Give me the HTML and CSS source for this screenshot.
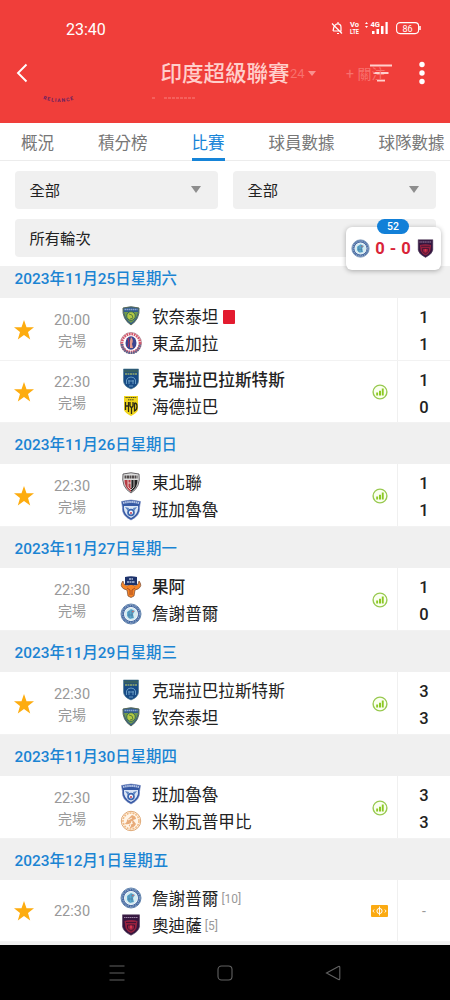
FILE: index.html
```html
<!DOCTYPE html>
<html lang="zh-Hant">
<head>
    <meta charset="UTF-8">
    <meta name="viewport" content="width=device-width, initial-scale=1.0">
    <title>印度超級聯賽</title>
    <link rel="stylesheet" href="styles.css">
</head>
<body>
    <svg class="sprite">
        <symbol id="star" viewBox="0 0 20 20">
            <path d="M10 0l2.500 7.200H20l-6 4.700 2.200 7.600L10 15l-6.200 4.500L6 11.900 0 7.200h7.500z" fill="#fdac0f"/>
        </symbol>
        <symbol id="stats" viewBox="0 0 16 16">
            <circle cx="8" cy="8" r="6.900" fill="#fafff0" stroke="#98c950" stroke-width="1.400"/>
            <path d="M4.200 8.600h1.900v3H4.200zM7 6.800h2v4.800H7zM9.800 4.500h1.900v7.100H9.800z" fill="#8cc924"/>
        </symbol>
        <symbol id="live" viewBox="0 0 17 12">
            <rect width="17" height="12" rx="1" fill="#fbaa12"/>
            <circle cx="8.500" cy="6" r="2.600" fill="none" stroke="#fff"/>
            <path d="M8.500 1.500v9M3.200 4.500L1.900 6l1.300 1.500M13.800 4.500L15.100 6l-1.300 1.500" fill="none" stroke="#fff" stroke-width=".9"/>
        </symbol>
        <symbol id="chennai" viewBox="0 0 22 22">
            <path d="M3 3q8-2.500 16 0 1 11-8 17Q2 14 3 3z" fill="#315b8d" stroke="#5b6c57"/>
            <path d="M4 7h14q-1 7-7 11-6-4-7-11z" fill="#719b48"/>
            <path d="M4.500 4.500h13" stroke="#8ba5cd" stroke-width="1.500" stroke-dasharray="1.500 .5"/>
            <circle cx="11" cy="11" r="4.300" fill="#b4c943" stroke="#38665d"/>
            <path d="M9 9l3 1 1 3-3 1" fill="none" stroke="#5c803d"/>
        </symbol>
        <symbol id="eastbengal" viewBox="0 0 22 22">
            <circle cx="11" cy="11" r="10.500" fill="#fff" stroke="#b89aa4"/>
            <circle cx="11" cy="11" r="9" fill="none" stroke="#d3576c" stroke-width="2.600" stroke-dasharray="1.800 .7"/>
            <path d="M2 12a9 9 0 0 0 18 0" fill="none" stroke="#54648e" stroke-width="2.500" stroke-dasharray="1.500 .8"/>
            <ellipse cx="11" cy="11" rx="5.500" ry="6.700" fill="#3b4590"/>
            <path d="M11 5q3 3 1 7l1 4h-3V9z" fill="#e59b8c"/>
            <path d="M8 6q2 5 0 9" fill="none" stroke="#b33153"/>
        </symbol>
        <symbol id="kerala" viewBox="0 0 22 22">
            <path d="M3.500 1h15v12q0 5-7.500 8-7.500-3-7.500-8z" fill="#174b86" stroke="#47758b" stroke-width=".6"/>
            <path d="M4 1.500h14v3H4z" fill="#365f62"/>
            <path d="M5 6h12" stroke="#96aa67" stroke-width="1.500" stroke-dasharray="2 .5"/>
            <path d="M6.500 16v-4q1-3 4.500-3t4.500 3v4M8 13h6M9 16v-4M13 16v-4M9 18h4" fill="none" stroke="#669bc3"/>
        </symbol>
        <symbol id="hyderabad" viewBox="0 0 22 22">
            <path d="M4 1h14v14q-1 3-7 6-6-3-7-6z" fill="#f0d51d"/>
            <path d="M5.500 2.500h11M8 4.800h6" stroke="#4c4820" stroke-width="1" stroke-dasharray="1.300 .5"/>
            <path d="M5.500 7v8M8.500 7v10M5.500 11h3M10 7v4l1.500 2L13 11V7M11.500 13v6M14.500 8v8q2.500-1 2.500-4.500T14.500 8" fill="none" stroke="#2c2a19" stroke-width="1.300"/>
        </symbol>
        <symbol id="northeast" viewBox="0 0 22 22">
            <path d="M3 2q8-2.500 16 0 2 13-8 19Q1 15 3 2z" fill="#ddd" stroke="#464346" stroke-width=".8"/>
            <path d="M4.500 5h13" stroke="#514b4b" stroke-width="3" stroke-dasharray="2 .5"/>
            <path d="M4.500 8H11v12q-7-5-6.500-12z" fill="#b73c43"/>
            <path d="M11 8h6.500Q18 15 11 20z" fill="#222"/>
            <path d="M8 8v7l3 3 3-3V8M11 8v8M8 11h3" fill="none" stroke="#ede8e4" stroke-width=".8"/>
        </symbol>
        <symbol id="bengaluru" viewBox="0 0 22 22">
            <path d="M1.500 2.500q9.500-3 19 0l-1 6q1 8-8.500 12.500Q1.500 16.500 2.500 8.500z" fill="#3659a4" stroke="#7185bd" stroke-width=".6"/>
            <path d="M3 4q8-2 16 0" fill="none" stroke="#b5c5e5" stroke-width="2" stroke-dasharray="1.600 .5"/>
            <path d="M4 7h14q1 8-7 12-8-4-7-12z" fill="#dce6f5"/>
            <path d="M5 8l4 1-1 3zm12 0l-4 1 1 3z" fill="#5a83c1"/>
            <circle cx="11" cy="13.500" r="3.800" fill="#3b66b0"/>
            <circle cx="11" cy="13.500" r="2" fill="#fff"/>
            <path d="M10 13h2v2h-2z" fill="#cf6b79"/>
        </symbol>
        <symbol id="goa" viewBox="0 0 22 22">
            <path d="M3 5Q-1 10 4 13l3 1 1 6 3 1.500 3-1.500 1-6 3-1q5-3 1-8 0 4-4 5l-4-2-4 2Q3 9 3 5z" fill="#f68527" stroke="#734531" stroke-width=".7"/>
            <path d="M5 1q6-1.500 12 0v8H5z" fill="#1d326b"/>
            <path d="M9 3h4M7 6h8" stroke="#afbddb" stroke-width="1.600" stroke-dasharray="2 .5"/>
            <path d="M7 12l3 2v5M15 12l-3 2v5" fill="none" stroke="#a74b22"/>
        </symbol>
        <symbol id="jamshedpur" viewBox="0 0 22 22">
            <circle cx="11" cy="11" r="10" fill="#fff" stroke="#6789b0"/>
            <circle cx="11" cy="11" r="8.300" fill="none" stroke="#41659f" stroke-width="2.600"/>
            <circle cx="11" cy="11" r="8.300" fill="none" stroke="#a8bdd5" stroke-width="1" stroke-dasharray="1.500 1"/>
            <circle cx="11" cy="11" r="6.500" fill="#d6ebf1"/>
            <path d="M7 9l4-3 4 2-2 3 1 4-4 1-3-3z" fill="#5ca9cd"/>
            <path d="M9 8v7M12 7v8M8 12h5" stroke="#47799e" stroke-width=".7"/>
            <path d="M12 9l2-1" stroke="#d96363"/>
        </symbol>
        <symbol id="minerva" viewBox="0 0 22 22">
            <circle cx="11" cy="11" r="9.700" fill="#fff5e8" stroke="#dfa875"/>
            <circle cx="11" cy="11" r="8" fill="none" stroke="#f0ba84" stroke-width="1.600" stroke-dasharray="2 1"/>
            <path d="M4 14q3-1 3-4l5-5q4 1 4 4l-3 1 3 4q-2 4-6 4 0-4-6-4z" fill="#e8ab79"/>
            <path d="M8 10l4-2M7 15l6-2M10 17l2-6" stroke="#fff4e5"/>
        </symbol>
        <symbol id="odisha" viewBox="0 0 22 22">
            <path d="M2.500 .8h17v12q-1 5-8.500 8.500-7.500-3.500-8.500-8.500z" fill="#35163f" stroke="#544060" stroke-width=".6"/>
            <path d="M4 3.500h14" stroke="#9d86a6" stroke-width="1.200" stroke-dasharray="1.500 .5"/>
            <path d="M4.500 7q6.500-2 13 0l-1 7q-2 4-5.500 5-3.500-1-5.500-5z" fill="#96213f"/>
            <path d="M6 8.500h10M7.500 14v-3h7v3q-1 2-3.500 3-2.500-1-3.500-3z" fill="none" stroke="#301333" stroke-width=".8"/>
            <path d="M10 11.500h2v3h-2z" fill="#d6334d"/>
        </symbol>
    </svg>

    <div class="phone">
        <header class="header">
            <div class="status-bar">
                <span class="clock">23:40</span>
                <svg class="status-icons" viewBox="0 0 92 16" width="92" height="16">
                    <path d="M3 11h8V7.500a3.500 3.500 0 0 0-3-3.600 3.500 3.500 0 0 0-3 1.500M4 6.500L3 11M7 13.500h2M2 3.500l10 10M8 2v2" fill="none" stroke="#fff" stroke-width="1.200"/>
                    <g fill="#fff" class="tiny">
                        <text x="20" y="7">Vo</text>
                        <text x="20" y="14" textLength="9" lengthAdjust="spacingAndGlyphs">LTE</text>
                        <text x="40.500" y="7">4G</text>
                    </g>
                    <path d="M35 4l1.500-2L38 4zm0 2l1.500 2L38 6zM42 11h2.500v3H42zm4.500-2H49v5h-2.500zM51 6h2.500v8H51zm4.500-4h2.200v12h-2.200z" fill="#fff"/>
                    <rect x="66.600" y="2.600" width="22" height="11" rx="3.500" fill="none" stroke="#fff" stroke-width="1.100"/>
                    <path d="M90 6v4" stroke="#fff" stroke-width="1.500"/>
                    <text x="72.500" y="11.500" class="battery">86</text>
                </svg>
            </div>
            <div class="title-bar">
                <svg class="back" viewBox="0 0 12 20" width="12" height="20">
                    <path d="M10.500 1.500L2 10l8.500 8.500" fill="none" stroke="#fff" stroke-width="1.900"/>
                </svg>
                <h1 class="title">印度超級聯賽</h1>
                <span class="season">24 <i class="season-arrow"></i></span>
                <span class="follow">+ 關注</span>
                <svg class="filter-icon" viewBox="0 0 22 18" width="22" height="18">
                    <path d="M0 1.500h22M3.500 9h15M7 16.500h8" stroke="#ffd0cc" stroke-width="1.800"/>
                </svg>
                <svg class="more" viewBox="0 0 6 24" width="6" height="24">
                    <circle cx="3" cy="3.500" r="2.700" fill="#fff"/>
                    <circle cx="3" cy="12" r="2.700" fill="#fff"/>
                    <circle cx="3" cy="20.500" r="2.700" fill="#fff"/>
                </svg>
            </div>
            <svg class="sponsor" viewBox="0 0 160 10" width="160" height="10">
                <path id="arc" d="M1 4q16 6 33 0" fill="none"/>
                <text class="sponsor-name"><textPath href="#arc" textLength="31">RELIANCE</textPath></text>
                <path d="M110 3h3M122 3h32" stroke="#f8827e" stroke-width="1" stroke-dasharray="3 1"/>
            </svg>
        </header>

        <nav class="tabs">
            <span class="tab">概況</span>
            <span class="tab">積分榜</span>
            <span class="tab active">比賽</span>
            <span class="tab">球員數據</span>
            <span class="tab">球隊數據</span>
        </nav>

        <div class="filters">
            <div class="select">全部<i class="arrow"></i></div>
            <div class="select">全部<i class="arrow"></i></div>
            <div class="select wide">所有輪次</div>
            <div class="live-score">
                <span class="minute">52</span>
                <svg class="mini"><use href="#jamshedpur"/></svg>
                <span>0 - 0</span>
                <svg class="mini"><use href="#odisha"/></svg>
            </div>
        </div>

        <main class="matches">
            <h2 class="date clipped">2023年11月25日星期六</h2>
            <div class="match">
                <svg class="star"><use href="#star"/></svg>
                <div class="time">20:00<span>完場</span></div>
                <div class="teams">
                    <div class="team"><svg class="crest"><use href="#chennai"/></svg>钦奈泰坦<i class="red-card"></i></div>
                    <div class="team"><svg class="crest"><use href="#eastbengal"/></svg>東孟加拉</div>
                </div>
                <div class="info"></div>
                <div class="score"><span>1</span><span>1</span></div>
            </div>
            <div class="match">
                <svg class="star"><use href="#star"/></svg>
                <div class="time">22:30<span>完場</span></div>
                <div class="teams">
                    <div class="team winner"><svg class="crest"><use href="#kerala"/></svg>克瑞拉巴拉斯特斯</div>
                    <div class="team"><svg class="crest"><use href="#hyderabad"/></svg>海德拉巴</div>
                </div>
                <div class="info"><svg class="stats"><use href="#stats"/></svg></div>
                <div class="score"><span>1</span><span>0</span></div>
            </div>

            <h2 class="date">2023年11月26日星期日</h2>
            <div class="match">
                <svg class="star"><use href="#star"/></svg>
                <div class="time">22:30<span>完場</span></div>
                <div class="teams">
                    <div class="team"><svg class="crest"><use href="#northeast"/></svg>東北聯</div>
                    <div class="team"><svg class="crest"><use href="#bengaluru"/></svg>班加魯魯</div>
                </div>
                <div class="info"><svg class="stats"><use href="#stats"/></svg></div>
                <div class="score"><span>1</span><span>1</span></div>
            </div>

            <h2 class="date">2023年11月27日星期一</h2>
            <div class="match">
                <span class="star"></span>
                <div class="time">22:30<span>完場</span></div>
                <div class="teams">
                    <div class="team winner"><svg class="crest"><use href="#goa"/></svg>果阿</div>
                    <div class="team"><svg class="crest"><use href="#jamshedpur"/></svg>詹謝普爾</div>
                </div>
                <div class="info"><svg class="stats"><use href="#stats"/></svg></div>
                <div class="score"><span>1</span><span>0</span></div>
            </div>

            <h2 class="date">2023年11月29日星期三</h2>
            <div class="match">
                <svg class="star"><use href="#star"/></svg>
                <div class="time">22:30<span>完場</span></div>
                <div class="teams">
                    <div class="team"><svg class="crest"><use href="#kerala"/></svg>克瑞拉巴拉斯特斯</div>
                    <div class="team"><svg class="crest"><use href="#chennai"/></svg>钦奈泰坦</div>
                </div>
                <div class="info"><svg class="stats"><use href="#stats"/></svg></div>
                <div class="score"><span>3</span><span>3</span></div>
            </div>

            <h2 class="date">2023年11月30日星期四</h2>
            <div class="match">
                <span class="star"></span>
                <div class="time">22:30<span>完場</span></div>
                <div class="teams">
                    <div class="team"><svg class="crest"><use href="#bengaluru"/></svg>班加魯魯</div>
                    <div class="team"><svg class="crest"><use href="#minerva"/></svg>米勒瓦普甲比</div>
                </div>
                <div class="info"><svg class="stats"><use href="#stats"/></svg></div>
                <div class="score"><span>3</span><span>3</span></div>
            </div>

            <h2 class="date">2023年12月1日星期五</h2>
            <div class="match">
                <svg class="star"><use href="#star"/></svg>
                <div class="time">22:30</div>
                <div class="teams">
                    <div class="team"><svg class="crest"><use href="#jamshedpur"/></svg>詹謝普爾<small>[10]</small></div>
                    <div class="team"><svg class="crest"><use href="#odisha"/></svg>奧迪薩<small>[5]</small></div>
                </div>
                <div class="info"><svg class="tv"><use href="#live"/></svg></div>
                <div class="score pending">-</div>
            </div>
        </main>

        <footer class="nav-bar">
            <svg viewBox="0 0 16 16" width="16" height="16"><path d="M.5 1h15M.5 8h15M.5 15h15"/></svg>
            <svg viewBox="0 0 16 16" width="16" height="16"><rect x="1" y="1" width="14" height="14" rx="3.500"/></svg>
            <svg viewBox="0 0 16 16" width="16" height="16"><path d="M1.500 8L13.500 1.500q1.300-.4 1.300 1v11q0 1.400-1.300 1z"/></svg>
        </footer>
    </div>
</body>
</html>
```
FILE: styles.css
```css
* {
    box-sizing: border-box;
}
body {
    margin: 0;
    font-family: Roboto, 'Noto Sans CJK TC', sans-serif;
    color: #222;
}
svg {
    display: block;
    flex: none;
}
.sprite {
    display: none;
}
.phone {
    width: 450px;
    height: 1000px;
    display: flex;
    flex-direction: column;
    overflow: hidden;
    background: #fff;
}

/* header */
.header {
    height: 122.5px;
    background: #f03e3a;
    flex: none;
}
.status-bar {
    height: 57px;
    padding: 19px 28px 0 66px;
    display: flex;
    justify-content: space-between;
    align-items: flex-start;
}
.clock {
    color: #fff;
    font-size: 16px;
    line-height: 21px;
}
.status-icons {
    margin-top: 1px;
}
.tiny {
    font-size: 7.5px;
    font-weight: 700;
}
.battery {
    fill: #fff;
    font-size: 9px;
}
.title-bar {
    position: relative;
    height: 32px;
    padding: 0 25px 0 16px;
    display: flex;
    align-items: center;
    justify-content: space-between;
}
.title {
    position: absolute;
    left: 0;
    right: 0;
    width: 130px;
    margin: 1px auto 0;
    text-align: center;
    white-space: nowrap;
    color: #ffcfcb;
    font-size: 21.5px;
    font-weight: 500;
    line-height: 32px;
    z-index: 1;
}
.season, .follow {
    position: absolute;
    color: #f7716d;
    font-size: 14px;
}
.season {
    left: 290px;
    font-size: 13px;
}
.season-arrow {
    display: inline-block;
    margin: 0 0 2px;
    border: 4px solid transparent;
    border-top: 5px solid #f9918d;
    border-bottom: 0;
}
.follow {
    left: 346px;
}
.filter-icon {
    margin-left: auto;
    margin-right: 27px;
}
.sponsor {
    margin: 6px 0 0 42px;
}
.sponsor-name {
    fill: #612064;
    font-size: 5px;
    font-weight: 700;
}

/* tabs */
.tabs {
    height: 38.5px;
    padding-left: 21px;
    display: flex;
    gap: 44px;
    border-bottom: 1px solid #ececec;
    flex: none;
}
.tab {
    height: 38.5px;
    color: #777;
    font-size: 16.5px;
    line-height: 42px;
    white-space: nowrap;
}
.tab.active {
    color: #1684d8;
    border-bottom: 3px solid #1684d8;
}

/* filters */
.filters {
    position: relative;
    height: 105px;
    padding: 10px 14.5px 0;
    display: grid;
    grid-template-columns: 1fr 1fr;
    grid-auto-rows: 38px;
    gap: 10px 15px;
    flex: none;
}
.select {
    padding: 0 17px 2px 15px;
    display: flex;
    justify-content: space-between;
    align-items: center;
    background: #f0f0f0;
    border-radius: 4px;
    font-size: 15.3px;
}
.select.wide {
    grid-column: 1 / 3;
}
.arrow {
    border: 5.5px solid transparent;
    border-top: 7px solid #8e8e8e;
    border-bottom: 0;
}
.live-score {
    position: absolute;
    left: 346px;
    top: 66px;
    width: 95px;
    height: 43px;
    padding: 0 6px 0 5px;
    display: flex;
    align-items: center;
    justify-content: space-between;
    background: #fff;
    border-radius: 6px;
    box-shadow: 0 1px 5px rgba(0, 0, 0, 0.3);
    color: #d92338;
    font-size: 16.5px;
    font-weight: 700;
    word-spacing: 1px;
    z-index: 1;
}
.minute {
    position: absolute;
    left: 31px;
    top: -8px;
    width: 32px;
    height: 15px;
    background: #1280d8;
    border-radius: 8px;
    color: #fff;
    font-size: 10.5px;
    font-weight: 500;
    line-height: 15px;
    text-align: center;
}
.mini {
    width: 19px;
    height: 19px;
}

/* match list */
.matches {
    flex: 1;
    min-height: 0;
    overflow: hidden;
    background: #f0f0f0;
}
.date {
    height: 41px;
    margin: 0;
    padding-left: 14.5px;
    background: #f0f0f0;
    color: #1b84d3;
    font-size: 15.4px;
    font-weight: 500;
    line-height: 44px;
}
.date.clipped {
    height: 31.8px;
    line-height: 26px;
}
.match {
    height: 62.8px;
    display: flex;
    align-items: center;
    background: #fff;
    border-bottom: 1px solid #f2f2f2;
}
.star {
    width: 20px;
    height: 20px;
    margin: 2px 0 0 14px;
}
.time {
    width: 76px;
    padding-top: 4px;
    display: flex;
    flex-direction: column;
    color: #999;
    font-size: 14.5px;
    line-height: 20px;
    text-align: center;
}
.time span {
    font-size: 14px;
}
.teams {
    width: 259px;
    height: 100%;
    padding: 6px 0 0 9px;
    border-left: 1px solid #f0f0f0;
}
.team {
    height: 27px;
    display: flex;
    align-items: center;
    font-size: 16.6px;
    line-height: 27px;
}
.team.winner {
    font-weight: 500;
}
.crest {
    width: 22px;
    height: 22px;
    margin: -2px 10px 0 0;
}
.red-card {
    width: 12px;
    height: 14px;
    margin: -1px 0 0 5px;
    background: #e31b2f;
    border-radius: 1px;
}
.team small {
    margin-left: 3px;
    color: #999;
    font-size: 12px;
}
.info {
    width: 28px;
    padding-top: 2px;
}
.stats {
    width: 16px;
    height: 16px;
    margin-left: 3px;
}
.tv {
    width: 17px;
    height: 12px;
    margin-left: 2px;
}
.score {
    width: 53px;
    height: 100%;
    padding-top: 6px;
    display: flex;
    flex-direction: column;
    border-left: 1px solid #f0f0f0;
    font-size: 16.5px;
    font-weight: 500;
    line-height: 27px;
    text-align: center;
}
.score.pending {
    padding-top: 18px;
    color: #999;
    font-size: 14px;
    font-weight: 400;
}

/* system navigation */
.nav-bar {
    height: 55px;
    padding: 0 109px;
    display: flex;
    justify-content: space-between;
    align-items: center;
    background: #000;
    flex: none;
}
.nav-bar svg {
    fill: none;
    stroke: #626262;
    stroke-width: 1.1;
}
```
